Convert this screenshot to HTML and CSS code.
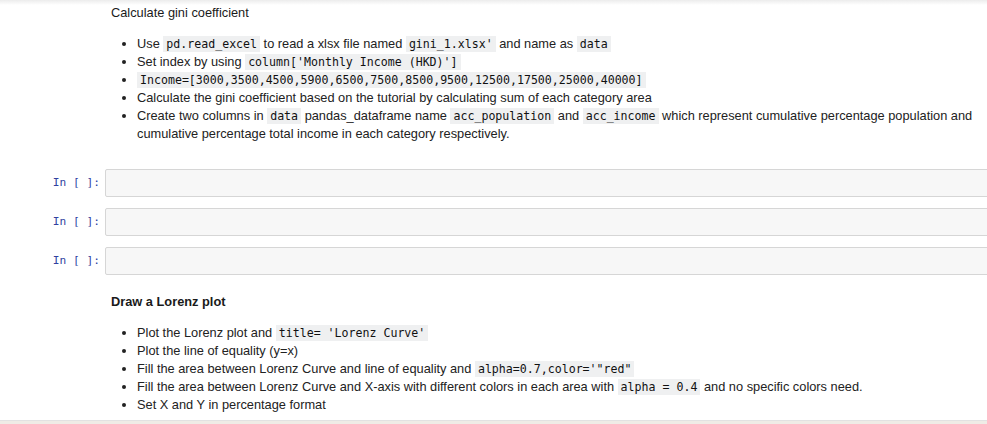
FILE: index.html
```html
<!DOCTYPE html>
<html>
<head>
<meta charset="utf-8">
<link rel="stylesheet" href="styles.css">
</head>
<body>
<div class="topshade"></div>
<div class="notebook">
  <div class="cell md">
    <div class="prompt"></div>
    <div class="content">
      <p class="title">Calculate gini coefficient</p>
      <ul>
        <li>Use <code>pd.read_excel</code> to read a xlsx file named <code>gini_1.xlsx'</code> and name as <code>data</code></li>
        <li>Set index by using <code>column['Monthly Income (HKD)']</code></li>
        <li><code>Income=[3000,3500,4500,5900,6500,7500,8500,9500,12500,17500,25000,40000]</code></li>
        <li>Calculate the gini coefficient based on the tutorial by calculating sum of each category area</li>
        <li>Create two columns in <code>data</code> pandas_dataframe name <code>acc_population</code> and <code>acc_income</code> which represent cumulative percentage population and cumulative percentage total income in each category respectively.</li>
      </ul>
    </div>
  </div>
  <div class="cell code first">
    <div class="prompt">In&nbsp;[&nbsp;]:</div>
    <div class="input"></div>
  </div>
  <div class="cell code">
    <div class="prompt">In&nbsp;[&nbsp;]:</div>
    <div class="input"></div>
  </div>
  <div class="cell code">
    <div class="prompt">In&nbsp;[&nbsp;]:</div>
    <div class="input"></div>
  </div>
  <div class="cell md second">
    <div class="prompt"></div>
    <div class="content">
      <p class="title bold">Draw a Lorenz plot</p>
      <ul>
        <li>Plot the Lorenz plot and <code>title= 'Lorenz Curve'</code></li>
        <li>Plot the line of equality (y=x)</li>
        <li>Fill the area between Lorenz Curve and line of equality and <code>alpha=0.7,color='"red"</code></li>
        <li>Fill the area between Lorenz Curve and X-axis with different colors in each area with <code>alpha = 0.4</code> and no specific colors need.</li>
        <li>Set X and Y in percentage format</li>
      </ul>
    </div>
  </div>
</div>
<div class="bottombar"></div>
</body>
</html>
```

FILE: styles.css
```css
html, body {
  margin: 0;
  padding: 0;
  background: #fff;
  overflow: hidden;
  height: 424px;
  width: 987px;
}
body {
  font-family: "Liberation Sans", Arial, sans-serif;
  font-size: 12.8px;
  color: #000;
  position: relative;
}
.topshade {
  position: absolute;
  top: 0;
  left: 0;
  right: 0;
  height: 5px;
  background: linear-gradient(#ececec, rgba(255,255,255,0));
}
.notebook {
  width: 1010px;
  padding-top: 4px;
}
.cell {
  display: flex;
}
.prompt {
  width: 100px;
  flex: none;
  text-align: right;
  font-family: "DejaVu Sans Mono", monospace;
  font-size: 11.2px;
  color: #303f9f;
  padding-right: 5px;
  line-height: 28px;
}
.content {
  flex: 1;
  padding-left: 6px;
  line-height: 18px;
}
.title {
  margin: 0;
  color: #1a1a1a;
}
.title.bold {
  font-weight: bold;
}
ul {
  margin: 13px 0 0 0;
  padding-left: 26px;
}
li {
  line-height: 18px;
  color: #222;
}
code {
  font-family: "DejaVu Sans Mono", monospace;
  font-size: 11.6px;
  color: #111;
  background: #eff0f1;
  padding: 1px 3px;
}
.code {
  margin-top: 11px;
}
.code.first {
  margin-top: 26px;
}
.input {
  flex: 1;
  height: 26px;
  background: #f7f7f7;
  border: 1px solid #d6d6d6;
  border-radius: 2px;
}
.second {
  margin-top: 18px;
}
.bottombar {
  position: absolute;
  left: 0;
  right: 0;
  bottom: 0;
  height: 3px;
  background: #efece6;
  border-top: 1px solid #e2e2e2;
}
```
